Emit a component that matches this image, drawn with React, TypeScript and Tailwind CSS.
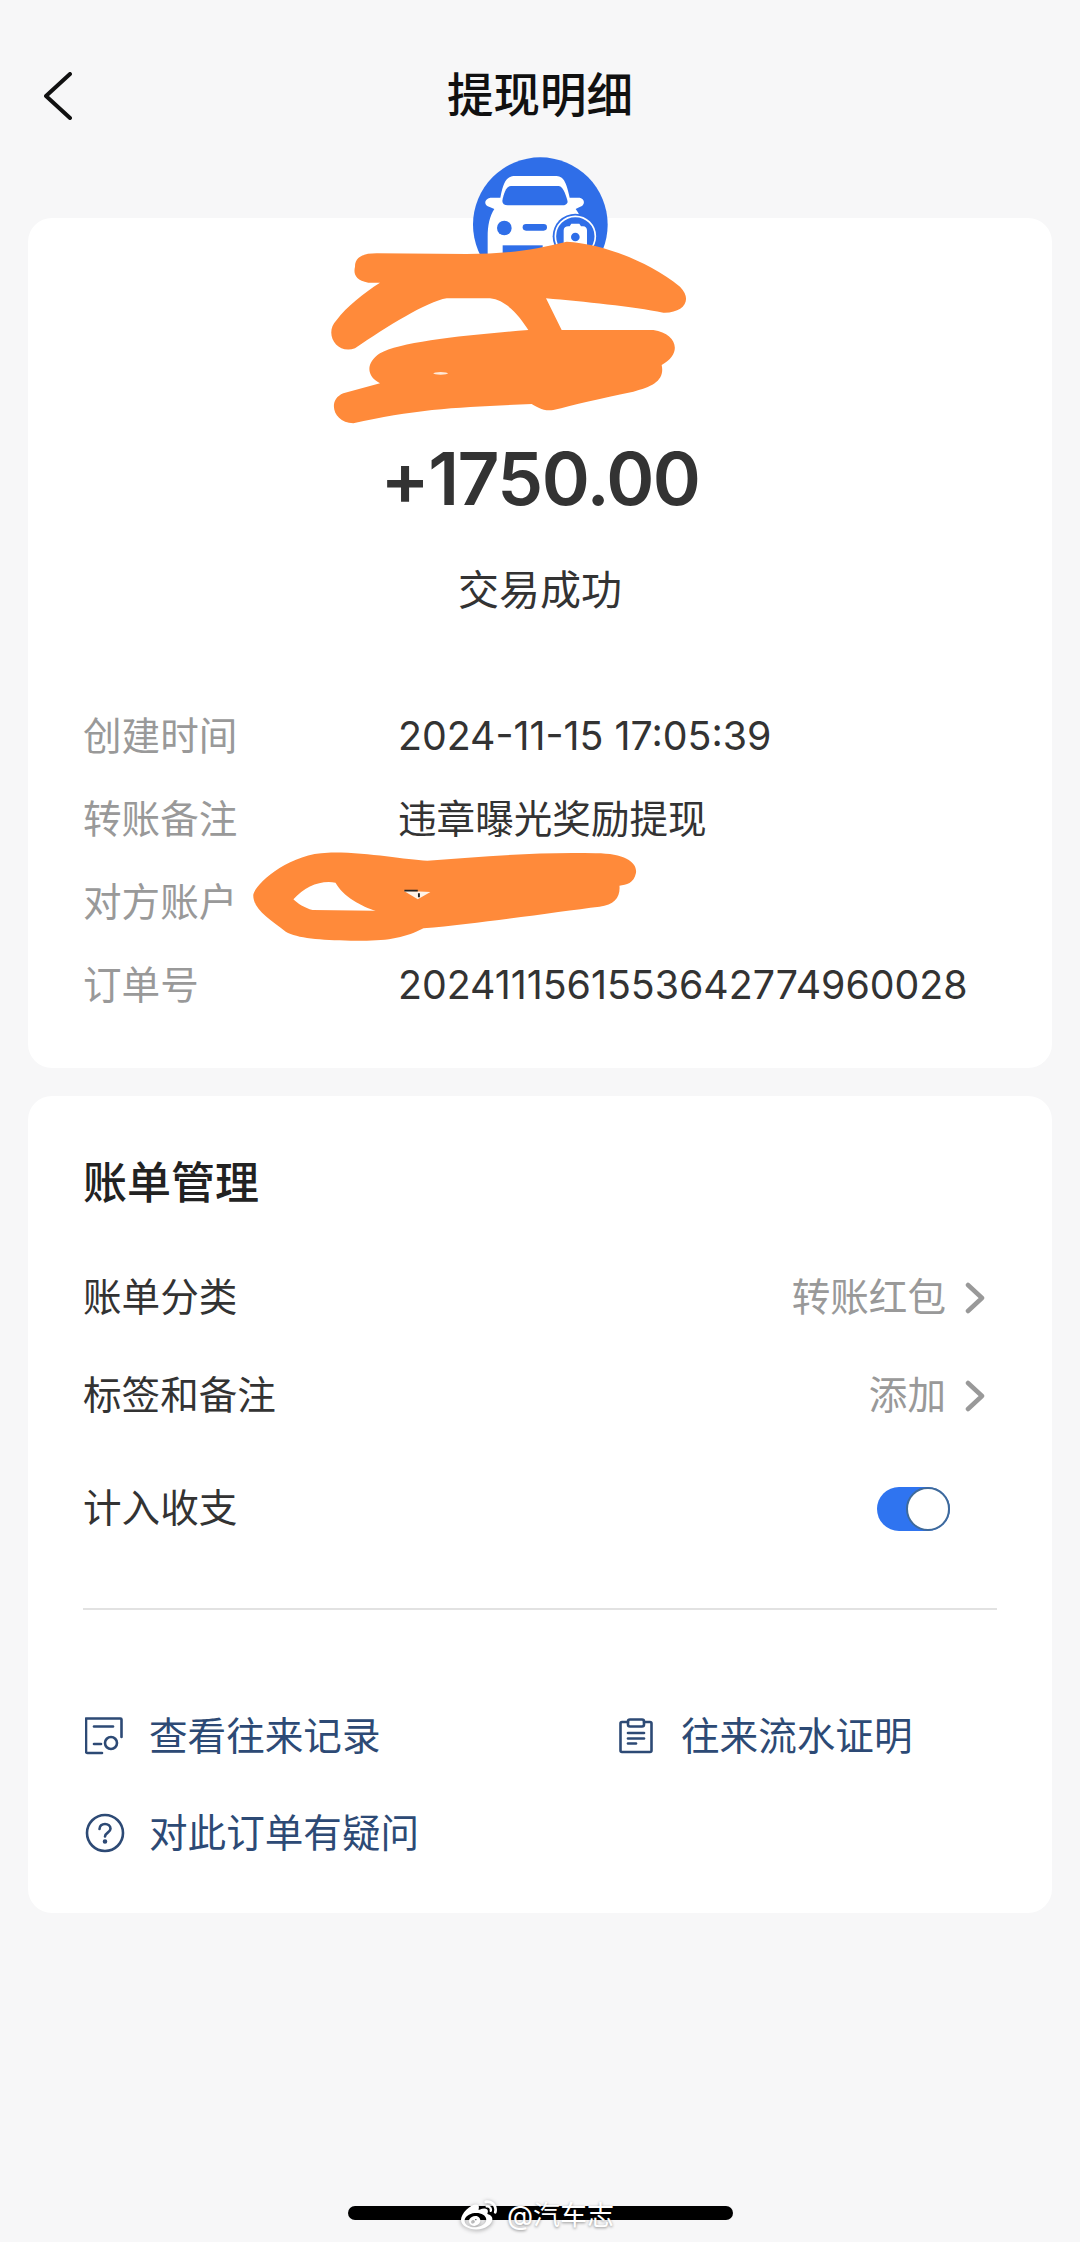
import { FaWeibo } from "react-icons/fa";

const font = { fontFamily: '"Inter", "Noto Sans CJK SC", sans-serif' };

function Row({ label, value }: { label: string; value: string }) {
  return (
    <div className="flex h-[83px] items-center">
      <div className="w-[315px] text-[38.6px] text-[#999999]">{label}</div>
      <div className="text-[38.6px] text-[#333333] whitespace-nowrap">{value}</div>
    </div>
  );
}

function NumRow({ label, value }: { label: string; value: string }) {
  return (
    <div className="flex h-[83px] items-center">
      <div className="w-[315px] text-[38.6px] text-[#999999]">{label}</div>
      <div className="text-[39.3px] text-[#333333] whitespace-nowrap">{value}</div>
    </div>
  );
}

function Chevron() {
  return (
    <svg width="20" height="32" viewBox="0 0 20 32" fill="none" className="ml-[19px]">
      <path d="M3 3L17 16L3 29" stroke="#999999" strokeWidth="4.5" strokeLinecap="round" strokeLinejoin="round" />
    </svg>
  );
}

function Avatar() {
  return (
    <svg width="135" height="135" viewBox="0 0 405 405" className="relative mx-auto block -mt-[61px]">
      <g transform="translate(-518 -80)">
        <circle cx="720" cy="283" r="202" fill="#2f6ee8" />
        <path
          d="M645 137H765C788 137 797 150 808 202H838C856 206 854 226 838 230L826 236C845 262 852 285 852 320V440H562V320C562 285 568 258 582 236L568 230C550 226 550 206 570 202H600C610 150 620 137 645 137Z"
          fill="#ffffff"
        />
        <path d="M632 167H775C790 167 800 205 802 215C800 222 795 225 785 225H622C612 225 606 220 606 212C610 190 618 167 632 167Z" fill="#2f6ee8" />
        <circle cx="612" cy="293" r="22" fill="#2f6ee8" />
        <rect x="667" y="281" width="73" height="20" rx="10" fill="#2f6ee8" />
        <rect x="607" y="345" width="120" height="40" fill="#2f6ee8" />
        <circle cx="825" cy="318" r="68" fill="#2f6ee8" />
        <circle cx="825" cy="318" r="60" fill="none" stroke="#ffffff" strokeWidth="5" />
        <path d="M790 300C790 292 796 288 804 288H808L813 280H837L842 288H848C856 288 860 294 860 300V350H790Z" fill="#ffffff" />
        <circle cx="825" cy="320" r="13" fill="#2f6ee8" />
      </g>
    </svg>
  );
}

function RecordIcon() {
  return (
    <svg width="38" height="38" viewBox="0 0 38 38" fill="none" stroke="#2d4a75" strokeWidth="2.6" strokeLinecap="round" strokeLinejoin="round">
      <path d="M17 36H2.5C1.6 36 1 35.4 1 34.5V1.5H35.5C36 1.5 36.5 2 36.5 2.5V20" />
      <path d="M9 9.5H28" />
      <path d="M9 27H16" />
      <circle cx="26" cy="26" r="6" />
    </svg>
  );
}

function ClipIcon() {
  return (
    <svg width="34" height="36" viewBox="0 0 34 36" fill="none" stroke="#2d4a75" strokeWidth="2.6" strokeLinecap="round" strokeLinejoin="round">
      <path d="M9 4H3C2 4 1.500 4.600 1.500 5.500V32.500C1.500 33.500 2 34 3 34H31C32 34 32.500 33.500 32.500 32.500V5.500C32.500 4.600 32 4 31 4H25" />
      <rect x="9" y="1.500" width="16" height="7" rx="2" />
      <path d="M9 15H25" />
      <path d="M9 20.500H25" />
      <path d="M9 25.500H17" />
    </svg>
  );
}

function QuestionIcon() {
  return (
    <svg width="40" height="40" viewBox="0 0 40 40" fill="none" stroke="#2d4a75" strokeWidth="2.6" strokeLinecap="round" strokeLinejoin="round">
      <circle cx="20" cy="20" r="18" />
      <path d="M14.500 16C14.500 12.800 17 11 20 11C23 11 25.500 12.800 25.500 15.800C25.500 19.500 20 19.800 20 23.500" />
      <circle cx="20" cy="28.500" r="1" fill="#2d4a75" />
    </svg>
  );
}

function Scribbles() {
  return (
    <svg width="1080" height="1000" viewBox="0 0 1080 1000" className="absolute left-0 top-0 pointer-events-none">
      <g transform="translate(300 130) scale(0.33333)">
        <path
          d="M165 410C165 380 190 370 230 370L500 372C620 372 700 360 800 335C900 340 1040 390 1140 470C1180 510 1150 550 1090 548C1000 530 850 515 738 505L785 600L1060 600C1130 610 1150 670 1085 705C1095 750 1060 770 1000 785C900 805 820 825 760 840C730 845 710 830 695 822C500 830 350 835 160 880C100 880 80 810 130 790L240 760C200 740 195 700 240 670C300 635 500 615 685 600C660 560 620 510 570 505L440 505C380 515 260 590 165 655C110 675 70 610 110 570C140 530 190 490 240 458L205 458C165 450 160 430 165 410Z"
          fill="#ff8a3a"
        />
        <ellipse cx="422" cy="730" rx="22" ry="4" fill="#ffe9d8" />
      </g>
      <g transform="translate(60 690) scale(0.38265 0.33333)">
        <path
          fillRule="evenodd"
          d="M505 615C510 580 600 490 700 488C800 485 900 510 960 512C1100 500 1250 485 1400 490C1480 490 1510 520 1505 550C1500 580 1480 585 1462 587C1465 620 1450 645 1410 650C1300 665 1100 700 950 715C900 745 850 755 760 752C680 750 620 745 590 725C550 690 505 660 505 615ZM610 628C640 590 680 570 720 578C740 620 790 650 825 662L660 660C640 655 620 640 610 628Z"
          fill="#ff8a3a"
        />
        <path d="M898 602L968 606L935 628Z" fill="#fff3e8" />
        <path d="M900 602H935M938 610V622" stroke="#222222" strokeWidth="5" />
      </g>
    </svg>
  );
}

export default function App() {
  return (
    <div className="relative flex h-[2242px] w-[1080px] flex-col overflow-hidden bg-[#f7f7f8]" style={font}>
      <header className="grid h-[218px] shrink-0 grid-cols-[1fr_auto_1fr] items-start">
        <div className="flex h-[192px] items-center pl-[44px]">
          <svg width="28" height="48" viewBox="0 0 28 48" fill="none">
            <path d="M26 2L2 24L26 46" stroke="#111111" strokeWidth="4" strokeLinecap="round" strokeLinejoin="round" />
          </svg>
        </div>
        <h1 className="flex h-[192px] items-center text-[46.5px] font-medium text-[#111111]">提现明细</h1>
        <div />
      </header>

      <section className="mx-[28px] shrink-0 rounded-[24px] bg-white px-[55px] pb-[41px]">
        <Avatar />
        <div className="mt-[143px] text-center text-[73px] font-semibold leading-[88px] tracking-[-1.5px] text-[#333333]">+1750.00</div>
        <div className="mt-[39px] text-center text-[41px] leading-[56px] text-[#333333]">交易成功</div>
        <div className="mt-[77px]">
          <NumRow label="创建时间" value="2024-11-15 17:05:39" />
          <Row label="转账备注" value="违章曝光奖励提现" />
          <Row label="对方账户" value="" />
          <NumRow label="订单号" value="2024111561553642774960028" />
        </div>
      </section>

      <section className="mx-[28px] mt-[28px] shrink-0 rounded-[24px] bg-white px-[55px] pb-[50px] pt-[57px]">
        <h2 className="text-[44px] font-medium leading-[60px] text-[#222222]">账单管理</h2>
        <div className="mt-[55px] flex h-[60px] items-center justify-between pr-[12px] text-[38.6px]">
          <span className="text-[#333333]">账单分类</span>
          <span className="flex items-center text-[#999999]">转账红包<Chevron /></span>
        </div>
        <div className="mt-[38px] flex h-[60px] items-center justify-between pr-[12px] text-[38.6px]">
          <span className="text-[#333333]">标签和备注</span>
          <span className="flex items-center text-[#999999]">添加<Chevron /></span>
        </div>
        <div className="mt-[53px] flex h-[60px] items-center justify-between pr-[47px] text-[38.6px]">
          <span className="text-[#333333]">计入收支</span>
          <span className="flex h-[44px] w-[73px] justify-end rounded-full bg-[#2f74f0]">
            <span className="h-[44px] w-[44px] rounded-full border-2 border-[#3f6a9a] bg-white" />
          </span>
        </div>
        <div className="mt-[69px] h-[2px] bg-[#e2e2e2]" />
        <div className="mt-[96px] grid grid-cols-[534px_1fr] gap-y-[37px] text-[38.6px] leading-[60px] text-[#2d4a75]">
          <div className="flex items-center">
            <span className="flex w-[66px] pl-[2px]"><RecordIcon /></span>查看往来记录
          </div>
          <div className="flex items-center">
            <span className="flex w-[64px] pl-[2px]"><ClipIcon /></span>往来流水证明
          </div>
          <div className="flex items-center">
            <span className="flex w-[66px] pl-[2px]"><QuestionIcon /></span>对此订单有疑问
          </div>
        </div>
      </section>

      <div className="mx-auto mb-[22px] mt-auto h-[14px] w-[385px] rounded-full bg-black" />

      <div className="absolute left-[460px] top-[2196px] flex items-center text-white [text-shadow:0_1px_3px_rgba(0,0,0,0.45)]">
        <FaWeibo className="h-[36px] w-[38px] drop-shadow-[0_1px_2px_rgba(0,0,0,0.4)]" />
        <span className="ml-[9px] text-[27px] leading-[40px]">@汽车志</span>
      </div>

      <Scribbles />
    </div>
  );
}
